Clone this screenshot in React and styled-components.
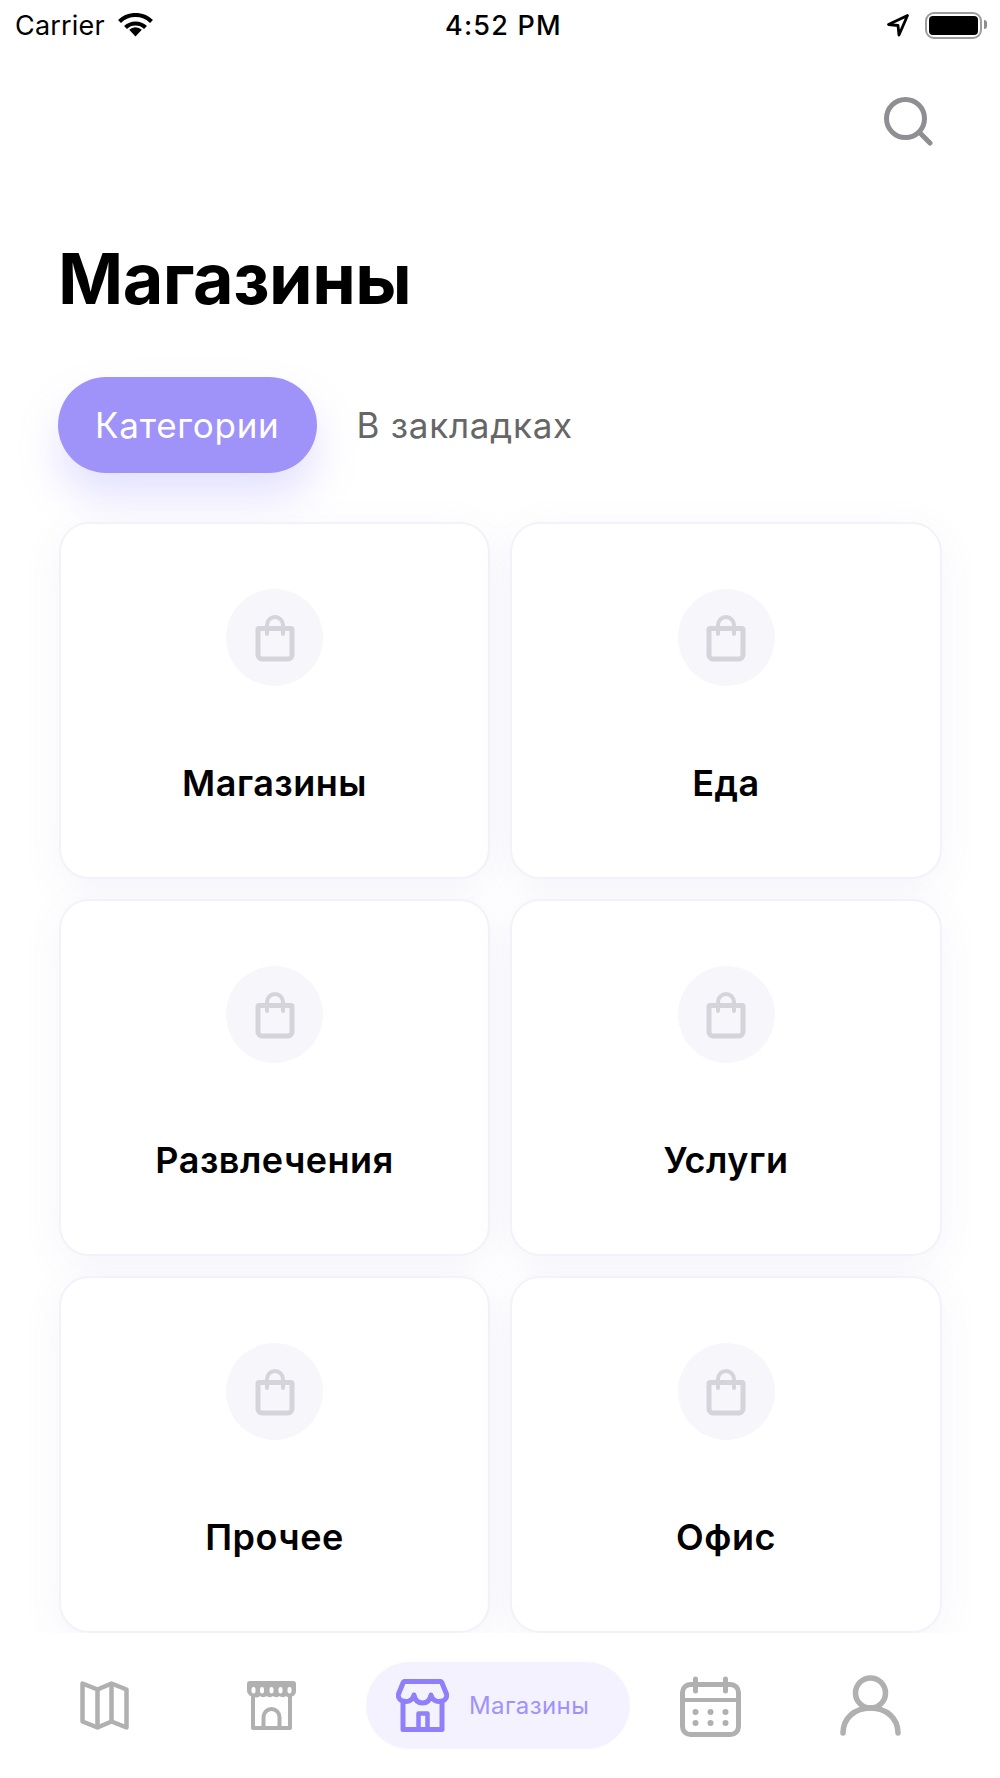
import React from 'react';
import styled, { createGlobalStyle } from 'styled-components';

const GlobalStyle = createGlobalStyle`
    html, body {
        margin: 0;
        padding: 0;
        background: #fff;
    }
    * {
        box-sizing: border-box;
    }
`;

const Page = styled.div`
    width: 1000px;
    height: 1778px;
    display: flex;
    flex-direction: column;
    overflow: hidden;
    background: #fff;
    font-family: Inter, "Noto Sans", sans-serif;
    color: #000;
`;

const StatusBar = styled.div`
    height: 50px;
    padding: 0 18px 0 15px;
    display: grid;
    grid-template-columns: 430px auto 1fr;
    align-items: center;
`;

const StatusLeft = styled.div`
    display: flex;
    align-items: center;
    gap: 13px;
    font-size: 27px;
    letter-spacing: 0.2px;
`;

const StatusTime = styled.div`
    font-size: 27px;
    font-weight: 500;
    letter-spacing: 1.2px;
`;

const StatusRight = styled.div`
    display: flex;
    justify-content: flex-end;
    align-items: center;
    gap: 15px;
`;

const Battery = styled.div`
    position: relative;
    width: 57px;
    height: 27px;
    border: 2.5px solid #9c9c9c;
    border-radius: 9px;
    padding: 2px;

    &::before {
        content: '';
        display: block;
        height: 100%;
        background: #000;
        border-radius: 4px;
    }

    &::after {
        content: '';
        position: absolute;
        right: -7px;
        top: 6px;
        width: 3px;
        height: 9px;
        background: #8e8e8e;
        border-radius: 0 3px 3px 0;
    }
`;

const Header = styled.div`
    height: 95px;
    padding: 46px 67px 0 0;
    display: flex;
    justify-content: flex-end;
    align-items: flex-start;
`;

const Title = styled.h1`
    margin: 90px 0 0 58px;
    font-size: 70px;
    line-height: 87px;
    font-weight: 700;
    letter-spacing: -0.5px;
`;

const Tabs = styled.div`
    margin: 55px 0 0 58px;
    display: flex;
    align-items: center;
    gap: 40px;
`;

const Tab = styled.div`
    height: 96px;
    display: flex;
    align-items: center;
    font-size: 35px;
    letter-spacing: 0.75px;
    color: ${p => (p.$active ? '#fff' : '#666')};
    ${p => p.$active && `
        padding: 0 37px;
        border-radius: 48px;
        background: #9f93fa;
        box-shadow: 0 24px 40px rgba(159, 147, 250, 0.28);
    `}
`;

const Grid = styled.div`
    margin: 49px 0 0 59px;
    width: 883px;
    display: grid;
    grid-template-columns: 431px 432px;
    grid-auto-rows: 357px;
    column-gap: 20px;
    row-gap: 20px;
`;

const Card = styled.div`
    background: #fff;
    border: 2px solid #f3f2fa;
    border-radius: 30px;
    box-shadow: 0 10px 40px rgba(110, 105, 190, 0.07);
    display: flex;
    flex-direction: column;
    align-items: center;
    padding-top: 65px;
`;

const IconCircle = styled.div`
    width: 97px;
    height: 97px;
    border-radius: 50%;
    background: #f7f6fb;
    display: flex;
    align-items: center;
    justify-content: center;
`;

const CardLabel = styled.div`
    margin-top: 76px;
    font-size: 36px;
    line-height: 42px;
    font-weight: 600;
    letter-spacing: 0.5px;
`;

const Spacer = styled.div`
    flex: 1;
`;

const BottomNav = styled.div`
    position: relative;
    z-index: 2;
    height: 145px;
    background: #fff;
    padding: 29px 0 0 80px;
    display: flex;
    align-items: flex-start;
`;

const NavIcon = styled.div`
    margin-left: ${p => p.$gap || 0}px;
    margin-top: ${p => p.$top || 0}px;
    display: flex;
`;

const NavPill = styled.div`
    margin-left: 70px;
    width: 264px;
    height: 87px;
    border-radius: 44px;
    background: #f4f2fe;
    padding-left: 30px;
    display: flex;
    align-items: center;
    gap: 20px;
    font-size: 24px;
    letter-spacing: 0.4px;
    color: #9f93fa;
`;

const WifiIcon = () => (
    <svg width="35" height="24" viewBox="0 0 35 24" fill="none" stroke="#000" strokeWidth="4.2">
        <path d="M1.5 8.5a23 23 0 0 1 32 0" />
        <path d="M7.5 14.5a14.5 14.5 0 0 1 20 0" />
        <path d="M17.5 23.5l-6.3-6.8a9 9 0 0 1 12.6 0z" fill="#000" stroke="none" />
    </svg>
);

const LocationIcon = () => (
    <svg width="24" height="24" viewBox="0 0 24 24" fill="none">
        <path d="M21.5 2.5L2.5 11.5l9.5 1 1 9.5z" stroke="#000" strokeWidth="2.8" strokeLinejoin="round" />
    </svg>
);

const SearchIcon = () => (
    <svg width="50" height="50" viewBox="0 0 50 50" fill="none" stroke="#8e8e93" strokeWidth="5" strokeLinecap="round">
        <circle cx="22.5" cy="22.5" r="19" />
        <path d="M36.5 36.5L47 47" />
    </svg>
);

const BagIcon = () => (
    <svg width="40" height="48" viewBox="0 0 40 48" fill="none" stroke="#d4d4da" strokeWidth="5" strokeLinecap="round" strokeLinejoin="round">
        <path d="M4 14.500h32a1 1 0 0 1 1 1V41a4 4 0 0 1-4 4H7a4 4 0 0 1-4-4V15.500a1 1 0 0 1 1-1z" />
        <path d="M12 20V11a8 8 0 0 1 16 0v9" strokeWidth="4" />
    </svg>
);

const MapIcon = () => (
    <svg width="49" height="49" viewBox="0 0 49 49" fill="none" stroke="#b0b0b0" strokeWidth="4.5" strokeLinejoin="round">
        <path d="M2.5 2.5l15 6 14-6 15 6v38l-15-6-14 6-15-6z" />
        <path d="M17.5 8.5v38M31.5 2.5v38" />
    </svg>
);

const CastleIcon = () => (
    <svg width="49" height="49" viewBox="0 0 49 49" fill="none" stroke="#b0b0b0" strokeWidth="4" strokeLinejoin="round">
        <path d="M3 0h43a3 3 0 0 1 3 3v7a6 6 0 0 1-4 5.5c-2 1.5-5 1-6-.5-1.5 1.5-5 1.5-6.5 0-1.5 1.5-5 1.5-6.5 0-1.5 1.5-5 1.5-6.5 0-1.5 1.5-5 1.5-6.5 0-1 1.5-4 2-6 .5A6 6 0 0 1 0 10V3a3 3 0 0 1 3-3z" fill="#b0b0b0" stroke="none" />
        <g stroke="#fff" strokeWidth="4" strokeLinecap="round">
            <path d="M6.5 8v2.5M15 8v2.5M24.500 8v2.5M33.500 8v2.5M42.500 8v2.5" />
        </g>
        <path d="M6 15v32h37V15" />
        <path d="M16.5 47V36a8 8 0 0 1 16 0v11" />
    </svg>
);

const StoreIcon = () => (
    <svg width="53" height="53" viewBox="0 0 53 53" fill="none" stroke="#8f80fa" strokeWidth="5" strokeLinejoin="round" strokeLinecap="round">
        <path d="M50.5 15c.7 3-1 6-4 7-5 1.5-10 0-11.5-6-1 5-4 8-8.5 8s-7.5-3-8.5-8c-1.5 6-6.5 7.5-11.5 6-3-1-4.7-4-4-7L7 4a2 2 0 0 1 2-1.5h35a2 2 0 0 1 2 1.5z" />
        <path d="M7 23v27.5h39V23" />
        <path d="M22.5 50V34.500h9V50" strokeWidth="4.5" />
    </svg>
);

const CalendarIcon = () => (
    <svg width="61" height="61" viewBox="0 0 61 61" fill="none" stroke="#b0b0b0" strokeWidth="5" strokeLinecap="round">
        <rect x="2.5" y="8.5" width="56" height="50" rx="8" />
        <path d="M2.5 24h56" strokeWidth="4" />
        <path d="M15.5 3v12M45.5 3v12" />
        <g fill="#b0b0b0" stroke="none">
            <circle cx="15.5" cy="36" r="3" />
            <circle cx="30.5" cy="36" r="3" />
            <circle cx="45.5" cy="36" r="3" />
            <circle cx="15.5" cy="47" r="3" />
            <circle cx="30.5" cy="47" r="3" />
            <circle cx="45.5" cy="47" r="3" />
        </g>
    </svg>
);

const UserIcon = () => (
    <svg width="61" height="61" viewBox="0 0 61 61" fill="none" stroke="#b0b0b0" strokeWidth="5.5" strokeLinecap="round">
        <circle cx="30.5" cy="18" r="15" />
        <path d="M3 58c0-15 12-25 27.5-25S58 43 58 58" />
    </svg>
);

const categories = ['Магазины', 'Еда', 'Развлечения', 'Услуги', 'Прочее', 'Офис'];

export default function App() {
    return (
        <Page>
            <GlobalStyle />
            <StatusBar>
                <StatusLeft>Carrier <WifiIcon /></StatusLeft>
                <StatusTime>4:52 PM</StatusTime>
                <StatusRight>
                    <LocationIcon />
                    <Battery />
                </StatusRight>
            </StatusBar>
            <Header>
                <SearchIcon />
            </Header>
            <Title>Магазины</Title>
            <Tabs>
                <Tab $active>Категории</Tab>
                <Tab>В закладках</Tab>
            </Tabs>
            <Grid>
                {categories.map(name => (
                    <Card key={name}>
                        <IconCircle><BagIcon /></IconCircle>
                        <CardLabel>{name}</CardLabel>
                    </Card>
                ))}
            </Grid>
            <Spacer />
            <BottomNav>
                <NavIcon $top={19}><MapIcon /></NavIcon>
                <NavIcon $top={19} $gap={118}><CastleIcon /></NavIcon>
                <NavPill>
                    <StoreIcon />
                    Магазины
                </NavPill>
                <NavIcon $top={14} $gap={50}><CalendarIcon /></NavIcon>
                <NavIcon $top={13} $gap={99}><UserIcon /></NavIcon>
            </BottomNav>
        </Page>
    );
}
